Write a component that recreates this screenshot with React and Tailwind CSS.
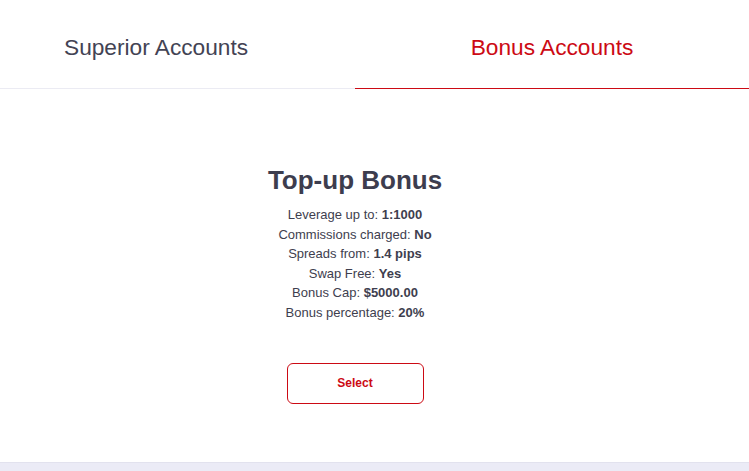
import React, { useState } from "react";

/* ---------- DATA ---------- */

const features = [
  { label: "Leverage up to:", value: "1:1000" },
  { label: "Commissions charged:", value: "No" },
  { label: "Spreads from:", value: "1.4 pips" },
  { label: "Swap Free:", value: "Yes" },
  { label: "Bonus Cap:", value: "$5000.00" },
  { label: "Bonus percentage:", value: "20%" },
];

/* ---------- MAIN COMPONENT ---------- */

export default function App() {
  const [tab, setTab] = useState("bonus");

  return (
    <div className="min-h-screen bg-white flex flex-col text-[#3e3e4e] font-['Liberation_Sans',Arial,sans-serif]">
      {/* Tabs */}
      <div className="flex h-[89px]">
        <button
          onClick={() => setTab("superior")}
          className={`w-[355px] flex items-center pl-[64px] pt-[6px] text-[22.7px] border-b ${
            tab === "superior"
              ? "border-[#cc0a14] text-[#cc0a14]"
              : "border-[#ebebf3] text-[#434354]"
          }`}
        >
          Superior Accounts
        </button>
        <button
          onClick={() => setTab("bonus")}
          className={`flex-1 flex items-center justify-center pt-[6px] text-[22.7px] border-b ${
            tab === "bonus"
              ? "border-[#cc0a14] text-[#cc0a14]"
              : "border-[#ebebf3] text-[#434354]"
          }`}
        >
          Bonus Accounts
        </button>
      </div>

      {/* Card */}
      <div className="w-[710px] flex flex-col items-center text-center pt-[75px] pb-[58px]">
        <h2 className="text-[26px] leading-[32px] font-bold text-[#3d3d4e]">
          Top-up Bonus
        </h2>
        <div className="mt-[9px] text-[13px] leading-[19.6px] text-[#3e3e4e]">
          {features.map((f) => (
            <p key={f.label}>
              {f.label} <span className="font-bold">{f.value}</span>
            </p>
          ))}
        </div>
        <button className="mt-[40px] w-[137px] h-[41px] rounded-[6px] border border-[#cc0a14] text-[#cc0a14] text-[12px] font-bold">
          Select
        </button>
      </div>

      {/* Footer strip */}
      <div className="h-[20px] bg-[#ebebf6] border-t border-[#e2e2ee]" />
    </div>
  );
}
